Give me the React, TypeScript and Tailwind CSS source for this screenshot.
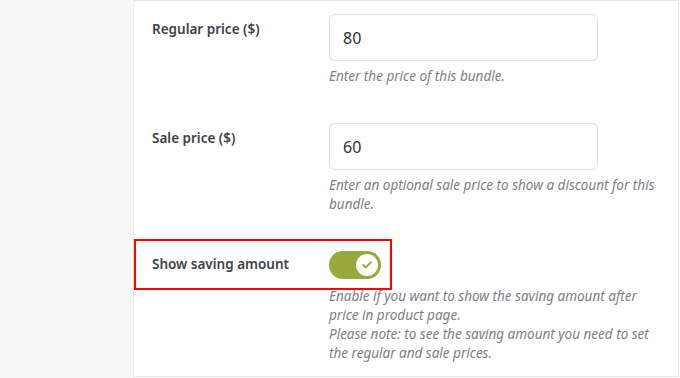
import { FaCheck } from "react-icons/fa";

const labelCls = "w-[177px] shrink-0 text-[13.5px] font-semibold text-[#3c434a]";
const helpCls = "text-[13.5px] italic leading-[19px] text-[#7c8086]";

function PriceRow({ label, value, children }: { label: string; value: string; children: React.ReactNode }) {
  return (
    <div className="flex">
      <div className={`${labelCls} pt-[5px]`}>{label}</div>
      <div>
        <div className="flex h-[47px] w-[269px] items-center rounded-[6px] border border-[#dcdfe6] bg-white px-[13px] text-[16px] text-[#2c3338]">
          {value}
        </div>
        <p className={`${helpCls} mt-[6px] w-[345px]`}>{children}</p>
      </div>
    </div>
  );
}

export default function App() {
  return (
    <div className="flex h-[378px] w-[680px] bg-white" style={{ fontFamily: '"Noto Sans", "Open Sans", sans-serif' }}>
      <aside className="w-[134px] shrink-0 border-r border-[#ebebeb] bg-[#f7f7f7]" />
      <main className="flex h-[377px] w-[545px] flex-col border-t border-r border-b border-[#e6e6e6] pt-[13px]">
        <div className="flex flex-col gap-[37px] pl-[18px]">
          <PriceRow label="Regular price ($)" value="80">
            Enter the price of this bundle.
          </PriceRow>
          <PriceRow label="Sale price ($)" value="60">
            Enter an optional sale price to show a discount for this
            <br />
            bundle.
          </PriceRow>
        </div>

        <div className="mt-[25px] flex h-[51px] w-[258px] items-center border-2 border-[#ff0000] pl-[16px]">
          <div className={labelCls}>Show saving amount</div>
          <button className="flex h-[28px] w-[52px] items-center justify-end rounded-full bg-[#98a83a] pr-[3px]">
            <span className="flex h-[22px] w-[22px] items-center justify-center rounded-full bg-white text-[#98a83a]">
              <FaCheck size={10} />
            </span>
          </button>
        </div>

        <p className={`${helpCls} ml-[195px] mt-[-3px] w-[345px]`}>
          Enable if you want to show the saving amount after
          <br />
          price in product page.
          <br />
          Please note: to see the saving amount you need to set
          <br />
          the regular and sale prices.
        </p>
      </main>
    </div>
  );
}
